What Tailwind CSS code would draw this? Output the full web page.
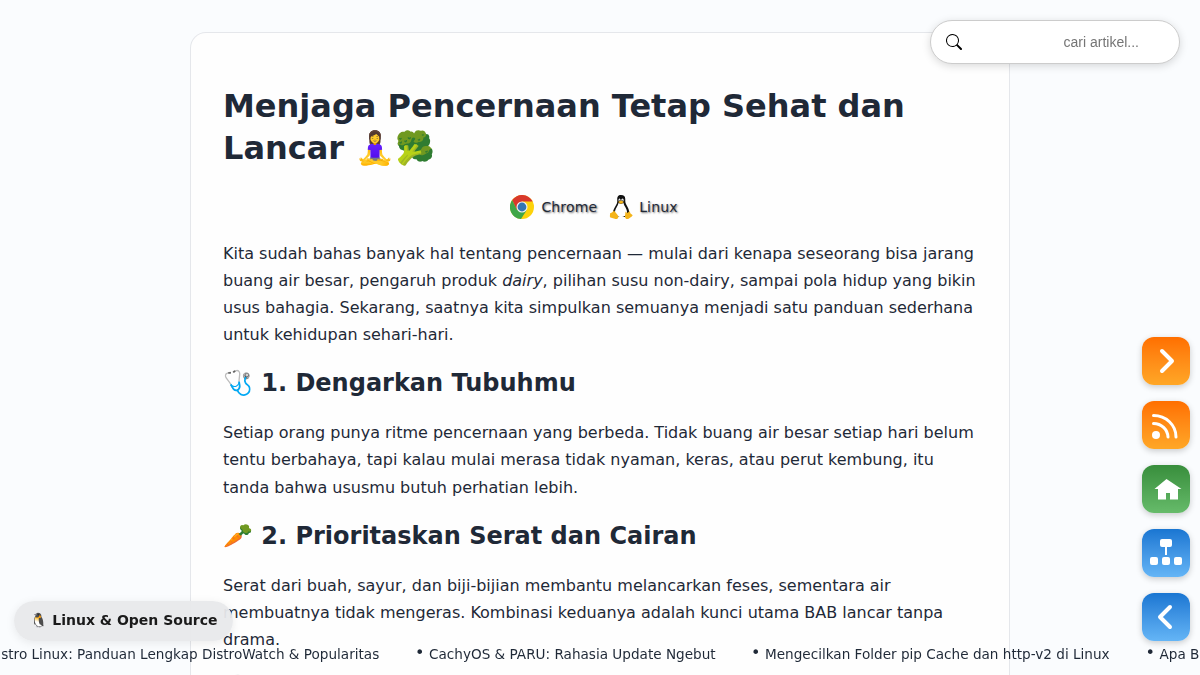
<!DOCTYPE html>
<html lang="id">
<head>
<meta charset="utf-8">
<title>Menjaga Pencernaan Tetap Sehat dan Lancar</title>
<script src="https://cdn.jsdelivr.net/npm/@tailwindcss/browser@4"></script>
</head>
<body class="h-[675px] overflow-hidden bg-[#fafcfe] font-['DejaVu_Sans','Noto_Color_Emoji',sans-serif] text-[#1f2937]">
<main class="mx-auto mt-8 h-[643px] w-[820px] overflow-hidden whitespace-nowrap rounded-t-2xl border border-b-0 border-[#e5e7eb] bg-[#fefefe] px-8 pt-[52px]">
  <h1 class="text-[32px] font-bold leading-[42px]">Menjaga Pencernaan Tetap Sehat dan<br>Lancar <span class="ml-[0.500px]">🧘‍♀️🥦</span></h1>
  <div class="mt-[25px] flex h-[26px] items-center justify-center pr-[12px] text-sm tracking-[0.010em] [text-shadow:1px_1px_2px_rgba(0,0,0,.6)]">
    <svg class="mr-[7px] size-6" viewBox="0 0 48 48">
      <circle cx="24" cy="24" r="24" fill="#fdd20a"/>
      <path d="M24 13H45.300A24 24 0 0 0 4.300 10.200L13.600 30 24 24Z" fill="#d8382c"/>
      <path d="M4.300 10.200A24 24 0 0 0 22 48L33 31 24 24 14 30Z" fill="#3fa648"/>
      <circle cx="24" cy="24" r="11" fill="#f3f3f3"/><circle cx="24" cy="24" r="8.800" fill="#3476b2"/>
    </svg>
    <span>Chrome</span>
    <svg class="ml-3 mr-[6px] h-6 w-6" viewBox="0 0 48 48">
      <path d="M24 0c-6 0-8 4-7.500 10 .4 6-1 8-4 13-3 5-6 11-4 16l9 5h14l8-5c2-8-1-13-4-18-3-5-3-7-3-13C32.500 3 30 0 24 0Z" fill="#111"/>
      <path d="M19 16c-1 6-7 11-7 19 0 6 6 9 12 9s12-4 12-10c0-7-6-12-7-18l-5 2Z" fill="#fff"/>
      <ellipse cx="21" cy="10" rx="2" ry="3" fill="#fff"/><ellipse cx="27" cy="10" rx="2.300" ry="3" fill="#fff"/>
      <circle cx="21.500" cy="10.500" r="1"/><circle cx="26.500" cy="10.500" r="1"/>
      <path d="m18 14 6-3 6 3-6 4Z" fill="#f4b41a"/>
      <path d="m10 31 8 10c2 4-1 8-5 7l-10-3c-2-1-1-3-1-7 0-3 2-2 4-3Z" fill="#f4b41a"/>
      <path d="M33 33c3 4 5 3 8-1l2 5 4 3c1 2-3 4-7 7-4 3-8 0-8-4Z" fill="#f4b41a"/>
    </svg>
    <span>Linux</span>
  </div>
  <p class="mt-[19.600px] text-base leading-[27.200px]">Kita sudah bahas banyak hal tentang pencernaan — mulai dari kenapa seseorang bisa jarang<br>buang air besar, pengaruh produk <em>dairy</em>, pilihan susu non-dairy, sampai pola hidup yang bikin<br>usus bahagia. Sekarang, saatnya kita simpulkan semuanya menjadi satu panduan sederhana<br>untuk kehidupan sehari-hari.</p>
  <h2 class="mt-[19.400px] text-2xl font-bold leading-[31.200px]">🩺 1. Dengarkan Tubuhmu</h2>
  <p class="mt-[20.100px] text-base leading-[27.200px]">Setiap orang punya ritme pencernaan yang berbeda. Tidak buang air besar setiap hari belum<br>tentu berbahaya, tapi kalau mulai merasa tidak nyaman, keras, atau perut kembung, itu<br>tanda bahwa ususmu butuh perhatian lebih.</p>
  <h2 class="mt-[20.200px] text-2xl font-bold leading-[31.200px]">🥕 2. Prioritaskan Serat dan Cairan</h2>
  <p class="mt-[19.800px] text-base leading-[27.200px]">Serat dari buah, sayur, dan biji-bijian membantu melancarkan feses, sementara air<br>membuatnya tidak mengeras. Kombinasi keduanya adalah kunci utama BAB lancar tanpa<br>drama.</p>
  <h2 class="mt-[19.400px] text-2xl font-bold leading-[31.200px]">🥛</h2>
</main>

<div class="fixed right-5 top-5 flex h-11 w-[250px] items-center rounded-full border border-[#ccc] bg-white pl-[15px] shadow-[0_2px_8px_rgba(0,0,0,.15)]">
  <svg class="size-4" viewBox="0 0 16 16" fill="#000"><path d="M11.742 10.344a6.500 6.500 0 1 0-1.397 1.398h-.001q.044.060.098.115l3.850 3.850a1 1 0 0 0 1.415-1.414l-3.850-3.850a1 1 0 0 0-.115-.1zM12 6.500a5.500 5.500 0 1 1-11 0 5.500 5.500 0 0 1 11 0"/></svg>
  <span class="ml-[101.500px] font-['Liberation_Sans',sans-serif] text-sm text-[#757575]">cari artikel...</span>
</div>

<nav class="fixed right-[10px] top-[337px] flex flex-col gap-4 text-white">
  <a class="size-12 rounded-xl bg-linear-to-b from-[#ff6f00] to-[#ffa726] shadow-[0_2px_6px_rgba(0,0,0,.2)]"><svg class="size-12" viewBox="0 0 48 48" fill="none" stroke="currentColor" stroke-width="4" stroke-linecap="round" stroke-linejoin="round"><path d="m20 14 10 10-10 10"/></svg></a>
  <a class="size-12 rounded-xl bg-linear-to-b from-[#ff6f00] to-[#ffa726] shadow-[0_2px_6px_rgba(0,0,0,.2)]"><svg class="size-12" viewBox="0 0 48 48" fill="none" stroke="currentColor" stroke-width="3"><circle cx="14" cy="34" r="4" fill="currentColor" stroke="none"/><path stroke-linecap="round" d="M11.500 22.500c8 0 14 6 14.500 13.500M11.500 14.500C24 14.500 34 24 34 36"/></svg></a>
  <a class="size-12 rounded-xl bg-linear-to-b from-[#388e3c] to-[#66bb6a] shadow-[0_2px_6px_rgba(0,0,0,.2)]"><svg class="size-12" viewBox="0 0 48 48" fill="currentColor"><path d="M24.500 14 12.500 24H16v10.500h8V28h4v6.500h8V24h3.500Z"/></svg></a>
  <a class="size-12 rounded-xl bg-linear-to-b from-[#1976d2] to-[#64b5f6] shadow-[0_2px_6px_rgba(0,0,0,.2)]"><svg class="size-12" viewBox="0 0 48 48" fill="currentColor"><rect x="18" y="10" width="12" height="8" rx="2"/><path d="M23 17h2v9h-2z"/><rect x="8" y="28" width="8" height="8" rx="2"/><rect x="20" y="28" width="8" height="8" rx="2"/><rect x="32" y="28" width="8" height="8" rx="2"/></svg></a>
  <a class="size-12 rounded-xl bg-linear-to-b from-[#1976d2] to-[#64b5f6] shadow-[0_2px_6px_rgba(0,0,0,.2)]"><svg class="size-12" viewBox="0 0 48 48" fill="none" stroke="currentColor" stroke-width="4" stroke-linecap="round" stroke-linejoin="round"><path d="M28 14 18 24l10 10"/></svg></a>
</nav>

<div class="fixed left-[14px] top-[601px] flex h-10 w-[219px] items-center whitespace-nowrap rounded-full bg-[#e8e9eb]/95 pb-0.5 pl-4 text-sm font-bold text-[#1a1a1a] shadow-[0_2px_10px_rgba(0,0,0,.08)]">🐧 Linux &amp; Open Source</div>

<div class="fixed inset-x-0 top-[644px] flex h-5 items-center overflow-hidden whitespace-nowrap text-[13.600px]">
  <span class="ml-[1.200px] w-[413.800px] shrink-0">stro Linux: Panduan Lengkap DistroWatch &amp; Popularitas</span>
  <span class="flex w-[336px] shrink-0 items-center"><span class="w-[14px] pb-[2px] text-base leading-4">•</span>CachyOS &amp; PARU: Rahasia Update Ngebut</span>
  <span class="flex w-[394.500px] shrink-0 items-center"><span class="w-[14px] pb-[2px] text-base leading-4">•</span>Mengecilkan Folder pip Cache dan http-v2 di Linux</span>
  <span class="flex shrink-0 items-center"><span class="w-[14px] pb-[2px] text-base leading-4">•</span>Apa Bedanya</span>
</div>
</body>
</html>
